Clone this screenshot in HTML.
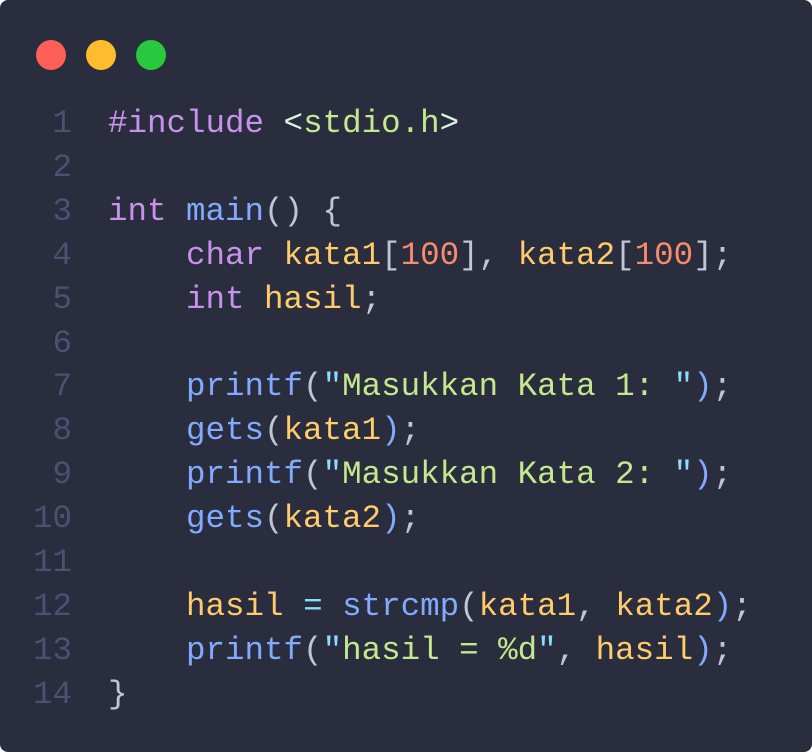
<!DOCTYPE html>
<html><head><meta charset="utf-8"><style>
html,body{margin:0;padding:0;background:#fff;}
.win{position:absolute;left:0;top:0;width:812px;height:752px;background:#292d3e;border-radius:8px;overflow:hidden;}
.dot{position:absolute;top:40px;width:30px;height:30px;border-radius:50%;}
pre{position:absolute;left:0;top:102px;margin:0;font-family:"Liberation Mono",monospace;font-size:32.5px;line-height:43.9px;color:#bfc7d5;}
.n{display:inline-block;width:72px;text-align:right;color:#4a5173;margin-right:36px;}
.k{color:#c792ea}.f{color:#82aaff}.v{color:#ffcb6b}.o{color:#f78c6c}.s{color:#c3e88d}.c{color:#89ddff}.a{color:#d9f5dd}.p{color:#bfc7d5}
</style></head><body><div class="win">
<div class="dot" style="left:36px;background:#ff5f56"></div>
<div class="dot" style="left:86px;background:#ffbd2e"></div>
<div class="dot" style="left:136px;background:#27c93f"></div>
<pre><span class="n">1</span><span class="k">#include</span> <span class="a">&lt;</span><span class="s">stdio.h</span><span class="a">&gt;</span>
<span class="n">2</span>
<span class="n">3</span><span class="k">int</span> <span class="f">main</span>() {
<span class="n">4</span>    <span class="k">char</span> <span class="v">kata1</span>[<span class="o">100</span>], <span class="v">kata2</span>[<span class="o">100</span>];
<span class="n">5</span>    <span class="k">int</span> <span class="v">hasil</span>;
<span class="n">6</span>
<span class="n">7</span>    <span class="f">printf</span>(<span class="c">"</span><span class="s">Masukkan Kata 1: </span><span class="c">"</span><span class="f">)</span>;
<span class="n">8</span>    <span class="f">gets</span>(<span class="v">kata1</span><span class="f">)</span>;
<span class="n">9</span>    <span class="f">printf</span>(<span class="c">"</span><span class="s">Masukkan Kata 2: </span><span class="c">"</span><span class="f">)</span>;
<span class="n">10</span>    <span class="f">gets</span>(<span class="v">kata2</span><span class="f">)</span>;
<span class="n">11</span>
<span class="n">12</span>    <span class="v">hasil</span> <span class="c">=</span> <span class="f">strcmp</span>(<span class="v">kata1</span>, <span class="v">kata2</span><span class="f">)</span>;
<span class="n">13</span>    <span class="f">printf</span>(<span class="c">"</span><span class="s">hasil = %d</span><span class="c">"</span>, <span class="v">hasil</span><span class="f">)</span>;
<span class="n">14</span>}</pre>
</div></body></html>
